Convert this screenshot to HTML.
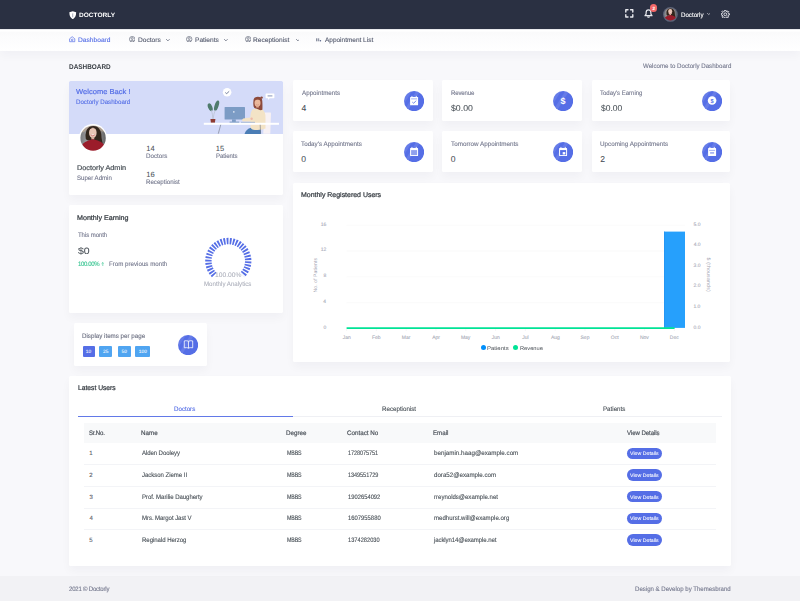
<!DOCTYPE html>
<html><head><meta charset="utf-8"><title>Doctorly Dashboard</title>
<style>
html,body{margin:0;padding:0;width:800px;height:601px;overflow:hidden;background:#f8f8fb}
body{position:relative;font-family:"Liberation Sans",sans-serif}
.t{position:absolute;white-space:nowrap;font-family:"Liberation Sans",sans-serif;text-rendering:geometricPrecision}
.r{position:absolute;display:block}
</style></head><body>
<div class="r" style="left:0.00px;top:0.00px;width:800.00px;height:601.00px;background:#f8f8fb;"></div>
<div class="r" style="left:0.00px;top:0.00px;width:800.00px;height:29.17px;background:#2a3042;"></div>
<div class="r" style="left:0.00px;top:29.17px;width:800.00px;height:21.83px;background:linear-gradient(#dcdde3 0px,#ffffff 1.4px,#ffffff 2.0px,#fafafb 3.4px,#fcfcfd 10px,#ffffff 100%);box-shadow:0 5px 10px rgba(18,38,63,0.03);"></div>
<div class="r" style="left:0.00px;top:575.60px;width:800.00px;height:25.40px;background:#f2f2f5;"></div>
<svg class="r" style="left:69.3px;top:10.5px" width="7.5" height="8.4" viewBox="0 0 15 17"><path d="M7.5 0.3 L14.3 2.6 C14.5 9 12.4 13.6 7.5 16.7 C2.6 13.6 0.5 9 0.7 2.6 Z" fill="#fff"/><path d="M6.6 5.2 L8.4 4.4 L8.4 12.6 L6.6 12.6 Z" fill="#9aa0b0"/></svg>
<span class="t" style="left:79.31px;top:13.00px;font-size:6.30px;line-height:6.30px;color:#ffffff;font-weight:bold;letter-spacing:0.000px;transform:scaleX(1.0401);transform-origin:0 0;">DOCTORLY</span>
<svg class="r" style="left:625.3px;top:9.4px" width="8.6" height="8.8" viewBox="0 0 86 88" fill="none" stroke="#e8e9ee" stroke-width="14" stroke-linecap="round" stroke-linejoin="round"><path d="M8 30 V8 H30 M56 8 H78 V30 M78 58 V80 H56 M30 80 H8 V58"/></svg>
<svg class="r" style="left:644.2px;top:9.0px" width="9" height="9.2" viewBox="0 0 90 92" fill="none" stroke="#e8e9ee" stroke-width="12" stroke-linejoin="round" stroke-linecap="round"><path d="M45 9 C29 9 21 21 21 37 V52 L10 67 H80 L69 52 V37 C69 21 61 9 45 9 Z"/><path d="M37 79 Q45 86 53 79"/></svg>
<div class="r" style="left:650.0px;top:4.4px;width:7.2px;height:7.2px;border-radius:50%;background:#f46a6a"></div>
<span class="t" style="left:652.43px;top:7.00px;font-size:4.60px;line-height:4.60px;color:#ffffff;font-weight:bold;letter-spacing:0.000px;-webkit-text-stroke:0.05px #fff;">2</span>
<svg class="r" style="left:663.4px;top:7.1px" width="14.8" height="14.8" viewBox="0 0 100 100"><defs><clipPath id="av1"><circle cx="50" cy="50" r="42"/></clipPath><filter id="av1f" x="-10%" y="-10%" width="120%" height="120%"><feGaussianBlur stdDeviation="1.3"/></filter><linearGradient id="av1g" x1="0" y1="0" x2="1" y2="0"><stop offset="0" stop-color="#6f7175"/><stop offset="0.35" stop-color="#9d9d9f"/><stop offset="0.7" stop-color="#8c8a88"/><stop offset="1" stop-color="#4e5055"/></linearGradient></defs><circle cx="50" cy="50" r="50" fill="#5d6479"/><g clip-path="url(#av1)"><g filter="url(#av1f)"><rect x="-5" y="-5" width="110" height="110" fill="url(#av1g)"/><path d="M0 0 H100 V26 Q84 30 74 22 Q60 14 46 18 Q30 14 18 28 Q8 30 0 28Z" fill="#cdb49a" opacity="0.55"/><path d="M24 52 Q20 22 36 11 Q50 4 64 10 Q80 20 80 48 Q82 62 84 68 Q74 70 66 62 L36 58 Q28 60 24 52Z" fill="#33261f"/><ellipse cx="49" cy="31" rx="13.5" ry="18.5" fill="#e8c5b5"/><path d="M36 20 Q44 10 60 16 Q54 12 46 12 Q38 14 36 20Z" fill="#33261f"/><path d="M42 37 Q49 45 56 37 Z" fill="#fff"/><path d="M42 38.5 Q49 46 56 38.5" stroke="#c84a52" stroke-width="2.2" fill="none"/><rect x="44" y="47" width="10" height="8" fill="#d9ad9b"/><path d="M4 100 Q6 72 22 64 Q36 56 49 54 Q64 56 78 64 Q94 72 96 100Z" fill="#9b1b2b"/></g></g></svg>
<span class="t" style="left:680.99px;top:13.00px;font-size:6.50px;line-height:6.50px;color:#ffffff;font-weight:normal;letter-spacing:0.000px;-webkit-text-stroke:0.12px #ffffff;transform:scaleX(0.9448);transform-origin:0 0;">Doctorly</span>
<svg class="r" style="left:706.6px;top:13.4px" width="3.4" height="2.2" viewBox="0 0 34 22" fill="none" stroke="#d5d7de" stroke-width="7" stroke-linecap="round"><path d="M4 4 L17 16 L30 4"/></svg>
<svg class="r" style="left:721.2px;top:9.5px" width="8.6" height="8.6" viewBox="0 0 8.6 8.6" fill="none" stroke="#e8e9ee" stroke-width="0.95" stroke-linejoin="round"><path d="M7.44 3.66 L8.57 3.79 L8.57 4.81 L7.44 4.94 L6.97 6.07 L7.68 6.95 L6.95 7.68 L6.07 6.97 L4.94 7.44 L4.81 8.57 L3.79 8.57 L3.66 7.44 L2.53 6.97 L1.65 7.68 L0.92 6.95 L1.63 6.07 L1.16 4.94 L0.03 4.81 L0.03 3.79 L1.16 3.66 L1.63 2.53 L0.92 1.65 L1.65 0.92 L2.53 1.63 L3.66 1.16 L3.79 0.03 L4.81 0.03 L4.94 1.16 L6.07 1.63 L6.95 0.92 L7.68 1.65 L6.97 2.53 Z"/><circle cx="4.3" cy="4.3" r="1.4"/></svg>
<svg class="r" style="left:69.3px;top:36.3px" width="6.4" height="6.4" viewBox="69.3 36.3 6.4 6.4" fill="none" stroke="#556ee6" stroke-width="0.7" stroke-linejoin="round"><path d="M72.5 37.0 L75.1 39.1 V42.0 H69.9 V39.1 Z"/><circle cx="72.5" cy="40.2" r="0.85"/></svg>
<span class="t" style="left:78.45px;top:38.00px;font-size:6.50px;line-height:6.50px;color:#556ee6;font-weight:normal;letter-spacing:0.000px;-webkit-text-stroke:0.12px #556ee6;transform:scaleX(1.0213);transform-origin:0 0;">Dashboard</span>
<svg class="r" style="left:128.80px;top:36.1px" width="6.4" height="6.4" viewBox="-3.2 -3.2 6.4 6.4" fill="none" stroke="#5d6375" stroke-width="0.65"><circle r="2.75"/><circle cx="0" cy="-0.7" r="0.95"/><path d="M-1.8 1.9 Q0 0.4 1.8 1.9"/></svg>
<span class="t" style="left:137.65px;top:38.00px;font-size:6.50px;line-height:6.50px;color:#545a6d;font-weight:normal;letter-spacing:0.000px;-webkit-text-stroke:0.12px #545a6d;transform:scaleX(1.0172);transform-origin:0 0;">Doctors</span>
<svg class="r" style="left:166.1px;top:39.2px" width="3.8" height="2.4" viewBox="0 0 38 24" fill="none" stroke="#6a7082" stroke-width="8" stroke-linecap="round"><path d="M4 4 L19 19 L34 4"/></svg>
<svg class="r" style="left:186.30px;top:36.1px" width="6.4" height="6.4" viewBox="-3.2 -3.2 6.4 6.4" fill="none" stroke="#5d6375" stroke-width="0.65"><circle r="2.75"/><circle cx="0" cy="-0.7" r="0.95"/><path d="M-1.8 1.9 Q0 0.4 1.8 1.9"/></svg>
<span class="t" style="left:195.16px;top:38.00px;font-size:6.50px;line-height:6.50px;color:#545a6d;font-weight:normal;letter-spacing:-0.000px;-webkit-text-stroke:0.12px #545a6d;transform:scaleX(1.0124);transform-origin:0 0;">Patients</span>
<svg class="r" style="left:224.4px;top:39.2px" width="3.8" height="2.4" viewBox="0 0 38 24" fill="none" stroke="#6a7082" stroke-width="8" stroke-linecap="round"><path d="M4 4 L19 19 L34 4"/></svg>
<svg class="r" style="left:244.70px;top:36.1px" width="6.4" height="6.4" viewBox="-3.2 -3.2 6.4 6.4" fill="none" stroke="#5d6375" stroke-width="0.65"><circle r="2.75"/><circle cx="0" cy="-0.7" r="0.95"/><path d="M-1.8 1.9 Q0 0.4 1.8 1.9"/></svg>
<span class="t" style="left:253.46px;top:38.00px;font-size:6.50px;line-height:6.50px;color:#545a6d;font-weight:normal;letter-spacing:0.000px;-webkit-text-stroke:0.12px #545a6d;transform:scaleX(1.0147);transform-origin:0 0;">Receptionist</span>
<svg class="r" style="left:295.5px;top:39.2px" width="3.8" height="2.4" viewBox="0 0 38 24" fill="none" stroke="#6a7082" stroke-width="8" stroke-linecap="round"><path d="M4 4 L19 19 L34 4"/></svg>
<svg class="r" style="left:315px;top:36.5px" width="7" height="5.5" viewBox="315 36.5 7 5.5"><rect x="316.1" y="37.8" width="1.0" height="3.0" fill="#7d8394"/><rect x="317.6" y="37.8" width="1.6" height="3.0" fill="#9499a8"/><circle cx="320.4" cy="40.3" r="0.8" fill="#56648a"/></svg>
<span class="t" style="left:325.38px;top:38.00px;font-size:6.50px;line-height:6.50px;color:#545a6d;font-weight:normal;letter-spacing:0.000px;-webkit-text-stroke:0.12px #545a6d;transform:scaleX(0.9950);transform-origin:0 0;">Appointment List</span>
<span class="t" style="left:69.07px;top:65.00px;font-size:6.90px;line-height:6.90px;color:#3b4046;font-weight:bold;letter-spacing:-0.001px;transform:scaleX(0.9300);transform-origin:0 0;">DASHBOARD</span>
<span class="t" style="left:642.67px;top:64.00px;font-size:6.50px;line-height:6.50px;color:#74788d;font-weight:normal;letter-spacing:0.000px;-webkit-text-stroke:0.12px #74788d;transform:scaleX(0.9452);transform-origin:0 0;">Welcome to Doctorly Dashboard</span>
<div class="r" style="left:69.00px;top:80.60px;width:214.00px;height:114.00px;background:#fff;border-radius:1.6px;box-shadow:0 5px 10px rgba(18,38,63,0.035);"></div>
<div class="r" style="left:69.00px;top:80.60px;width:214.00px;height:53.10px;background:#d4dbf9;border-radius:1.6px 1.6px 0 0;"></div>
<span class="t" style="left:76.06px;top:88.00px;font-size:7.20px;line-height:7.20px;color:#556ee6;font-weight:normal;letter-spacing:0.000px;-webkit-text-stroke:0.2px #556ee6;transform:scaleX(1.0529);transform-origin:0 0;">Welcome Back !</span>
<span class="t" style="left:75.59px;top:100.00px;font-size:6.50px;line-height:6.50px;color:#556ee6;font-weight:normal;letter-spacing:0.000px;-webkit-text-stroke:0.12px #556ee6;transform:scaleX(0.9451);transform-origin:0 0;">Doctorly Dashboard</span>
<svg class="r" style="left:200px;top:84px" width="82" height="49.7" viewBox="200 84 82 49.7">
<circle cx="227.1" cy="92.3" r="4.3" fill="#fff"/><path d="M225.3 92.6 L226.7 93.6 L229.2 91.3" stroke="#46557a" stroke-width="0.75" fill="none"/>
<path d="M266.2 93.4 H273.8 Q274.4 93.4 274.4 94 V97.6 Q274.4 98.3 273.8 98.3 H269.6 L268.3 100 L268 98.3 H266.2 Q265.6 98.3 265.6 97.6 V94 Q265.6 93.4 266.2 93.4 Z" fill="#fff"/><rect x="267.6" y="95.3" width="4.8" height="1.2" fill="#9aa6c4"/>
<ellipse cx="210.2" cy="107.2" rx="2.1" ry="4.1" transform="rotate(-22 210.2 107.2)" fill="#4f7b6c"/>
<ellipse cx="216.6" cy="105.6" rx="2.0" ry="5.4" transform="rotate(18 216.6 105.6)" fill="#4f7b6c"/>
<path d="M211.4 110 Q212.6 114 212.9 119 M215.3 110 Q213.6 114 213.1 119" stroke="#b8c0cf" stroke-width="0.7" fill="none"/>
<path d="M210.4 119 H215.4 L214.9 122.8 H210.9 Z" fill="#8e3b32"/>
<rect x="224.6" y="106.9" width="20.4" height="12.5" rx="0.5" fill="#7c9cc5"/>
<rect x="233.1" y="111.2" width="1.4" height="1.4" fill="#e9eef7"/>
<rect x="232" y="119.3" width="3.8" height="2.6" fill="#7c9cc5"/><rect x="229.6" y="121.6" width="9.6" height="1.2" fill="#7c9cc5"/>
<path d="M264.6 112.5 H270.4 Q271.1 112.5 271 113.4 L270.3 133.7 H263.2 Z" fill="#f7f1f4"/>
<path d="M244.5 134 Q246 129 251 127.8 H258.5 Q261.5 128.4 260.8 134 Z" fill="#4a7db5"/>
<path d="M252.4 109.4 Q257.5 107.8 262.3 109.6 Q265.6 111.5 265.5 118 V128.6 Q262 130.4 255 130 Q251 129.8 250.5 127 L250.6 121.5 Q246 121.8 242.3 121.2 Q241.8 119.4 243.2 118.6 L250.2 117.6 Q250.5 112 252.4 109.4 Z" fill="#f3e3c6"/>
<circle cx="251.6" cy="118.8" r="1.2" fill="#efb8a8"/>
<rect x="241" y="121.9" width="14" height="0.8" fill="#8aa3c8"/>
<path d="M253.4 101.5 Q253.4 96.8 257.8 96.8 Q262 96.8 262.3 101 Q262.6 105.5 262.4 109.8 Q260.5 110.6 258.6 109.6 L256 108.6 Q254 108.4 253.6 106.5 Q253.1 104 253.4 101.5 Z" fill="#8d4a3b"/>
<circle cx="261.6" cy="97.6" r="1.2" fill="#8d4a3b"/>
<ellipse cx="257.5" cy="102.9" rx="3.0" ry="3.6" fill="#eab89b"/><path d="M255.9 104.6 Q257.4 105.6 258.9 104.6" stroke="#b86a5a" stroke-width="0.35" fill="none"/>
<path d="M254.4 101.0 Q256.8 98.6 260.9 100.2 Q260.6 98.0 257.6 97.9 Q254.8 98.2 254.4 101.0 Z" fill="#8d4a3b"/>
<rect x="256.2" y="106.1" width="2.6" height="1.4" fill="#e6ae93"/>
<rect x="203.8" y="122.8" width="75.2" height="2.0" fill="#fff"/>
<path d="M220.7 124.8 L218.3 133.7" stroke="#6f7483" stroke-width="0.6"/><path d="M260.2 124.8 L260.6 133.7" stroke="#6f7483" stroke-width="0.6"/>
</svg>
<svg class="r" style="left:78.6px;top:123.7px" width="28.2" height="28.2" viewBox="0 0 100 100"><defs><clipPath id="av2"><circle cx="50" cy="50" r="45"/></clipPath><filter id="av2f" x="-10%" y="-10%" width="120%" height="120%"><feGaussianBlur stdDeviation="1.3"/></filter><linearGradient id="av2g" x1="0" y1="0" x2="1" y2="0"><stop offset="0" stop-color="#6f7175"/><stop offset="0.35" stop-color="#9d9d9f"/><stop offset="0.7" stop-color="#8c8a88"/><stop offset="1" stop-color="#4e5055"/></linearGradient></defs><circle cx="50" cy="50" r="50" fill="#ffffff"/><g clip-path="url(#av2)"><g filter="url(#av2f)"><rect x="-5" y="-5" width="110" height="110" fill="url(#av2g)"/><path d="M0 0 H100 V26 Q84 30 74 22 Q60 14 46 18 Q30 14 18 28 Q8 30 0 28Z" fill="#cdb49a" opacity="0.55"/><path d="M24 52 Q20 22 36 11 Q50 4 64 10 Q80 20 80 48 Q82 62 84 68 Q74 70 66 62 L36 58 Q28 60 24 52Z" fill="#33261f"/><ellipse cx="49" cy="31" rx="13.5" ry="18.5" fill="#e8c5b5"/><path d="M36 20 Q44 10 60 16 Q54 12 46 12 Q38 14 36 20Z" fill="#33261f"/><path d="M42 37 Q49 45 56 37 Z" fill="#fff"/><path d="M42 38.5 Q49 46 56 38.5" stroke="#c84a52" stroke-width="2.2" fill="none"/><rect x="44" y="47" width="10" height="8" fill="#d9ad9b"/><path d="M4 100 Q6 72 22 64 Q36 56 49 54 Q64 56 78 64 Q94 72 96 100Z" fill="#9b1b2b"/></g></g></svg>
<span class="t" style="left:77.10px;top:166.00px;font-size:6.90px;line-height:6.90px;color:#495057;font-weight:normal;letter-spacing:0.000px;-webkit-text-stroke:0.2px #495057;transform:scaleX(1.0598);transform-origin:0 0;">Doctorly Admin</span>
<span class="t" style="left:77.43px;top:176.00px;font-size:6.50px;line-height:6.50px;color:#74788d;font-weight:normal;letter-spacing:0.000px;-webkit-text-stroke:0.12px #74788d;transform:scaleX(0.9366);transform-origin:0 0;">Super Admin</span>
<span class="t" style="left:146.24px;top:145.00px;font-size:7.50px;line-height:7.50px;color:#495057;font-weight:normal;letter-spacing:0.150px;-webkit-text-stroke:0.06px #495057;">14</span>
<span class="t" style="left:146.09px;top:154.00px;font-size:6.50px;line-height:6.50px;color:#74788d;font-weight:normal;letter-spacing:0.000px;-webkit-text-stroke:0.12px #74788d;transform:scaleX(0.9571);transform-origin:0 0;">Doctors</span>
<span class="t" style="left:215.64px;top:145.00px;font-size:7.50px;line-height:7.50px;color:#495057;font-weight:normal;letter-spacing:0.150px;-webkit-text-stroke:0.06px #495057;">15</span>
<span class="t" style="left:215.50px;top:154.00px;font-size:6.50px;line-height:6.50px;color:#74788d;font-weight:normal;letter-spacing:-0.066px;-webkit-text-stroke:0.12px #74788d;transform:scaleX(0.9300);transform-origin:0 0;">Patients</span>
<span class="t" style="left:146.24px;top:171.00px;font-size:7.50px;line-height:7.50px;color:#495057;font-weight:normal;letter-spacing:0.150px;-webkit-text-stroke:0.06px #495057;">16</span>
<span class="t" style="left:146.09px;top:180.00px;font-size:6.50px;line-height:6.50px;color:#74788d;font-weight:normal;letter-spacing:0.000px;-webkit-text-stroke:0.12px #74788d;transform:scaleX(0.9437);transform-origin:0 0;">Receptionist</span>
<div class="r" style="left:293.00px;top:80.40px;width:139.60px;height:40.60px;background:#fff;border-radius:1.6px;box-shadow:0 5px 10px rgba(18,38,63,0.035);"></div>
<span class="t" style="left:301.58px;top:91.00px;font-size:6.50px;line-height:6.50px;color:#74788d;font-weight:normal;letter-spacing:0.000px;-webkit-text-stroke:0.12px #74788d;transform:scaleX(0.9594);transform-origin:0 0;">Appointments</span>
<span class="t" style="left:301.41px;top:104.00px;font-size:8.60px;line-height:8.60px;color:#495057;font-weight:normal;letter-spacing:0.000px;-webkit-text-stroke:0.06px #495057;">4</span>
<svg class="r" style="left:404.10px;top:90.50px" width="20.2" height="20.2" viewBox="-10.1 -10.1 20.2 20.2"><defs><clipPath id="ccal-check414100"><circle r="10.1"/></clipPath></defs><circle r="10.1" fill="#556ee6"/><g clip-path="url(#ccal-check414100)"><rect x="-1.5" y="-14" width="3.3" height="28" fill="rgba(255,255,255,0.1)" transform="rotate(32) translate(-2 0)"/><rect x="-8" y="-14" width="5" height="28" fill="rgba(255,255,255,0.1)" transform="rotate(32) translate(-4 0)"/></g><g transform="translate(0 -0.6)"><rect x="-4" y="-3.6" width="8" height="8.4" rx="0.6" fill="#fff"/><rect x="-3" y="-2" width="6" height="0.8" fill="#8fa0ee"/><rect x="-2.6" y="-4.6" width="0.9" height="1.6" fill="#fff"/><rect x="1.7" y="-4.6" width="0.9" height="1.6" fill="#fff"/><path d="M-1.8 1.6 L-0.4 2.8 L2 0.2" stroke="#556ee6" stroke-width="0.8" fill="none"/></g></svg>
<div class="r" style="left:442.40px;top:80.40px;width:139.20px;height:40.60px;background:#fff;border-radius:1.6px;box-shadow:0 5px 10px rgba(18,38,63,0.035);"></div>
<span class="t" style="left:450.50px;top:91.00px;font-size:6.50px;line-height:6.50px;color:#74788d;font-weight:normal;letter-spacing:-0.168px;-webkit-text-stroke:0.12px #74788d;transform:scaleX(0.9300);transform-origin:0 0;">Revenue</span>
<span class="t" style="left:450.91px;top:104.00px;font-size:8.60px;line-height:8.60px;color:#495057;font-weight:normal;letter-spacing:0.000px;-webkit-text-stroke:0.06px #495057;transform:scaleX(1.0183);transform-origin:0 0;">$0.00</span>
<svg class="r" style="left:553.10px;top:90.50px" width="20.2" height="20.2" viewBox="-10.1 -10.1 20.2 20.2"><defs><clipPath id="cdollar563100"><circle r="10.1"/></clipPath></defs><circle r="10.1" fill="#556ee6"/><g clip-path="url(#cdollar563100)"><rect x="-1.5" y="-14" width="3.3" height="28" fill="rgba(255,255,255,0.1)" transform="rotate(32) translate(-2 0)"/><rect x="-8" y="-14" width="5" height="28" fill="rgba(255,255,255,0.1)" transform="rotate(32) translate(-4 0)"/></g><g transform="translate(0 -0.6)"><text x="0" y="3.2" text-anchor="middle" font-family="Liberation Sans" font-weight="bold" font-size="9" fill="#fff">$</text></g></svg>
<div class="r" style="left:592.00px;top:80.40px;width:138.40px;height:40.60px;background:#fff;border-radius:1.6px;box-shadow:0 5px 10px rgba(18,38,63,0.035);"></div>
<span class="t" style="left:600.46px;top:91.00px;font-size:6.50px;line-height:6.50px;color:#74788d;font-weight:normal;letter-spacing:-0.031px;-webkit-text-stroke:0.12px #74788d;transform:scaleX(0.9300);transform-origin:0 0;">Today's Earning</span>
<span class="t" style="left:600.51px;top:104.00px;font-size:8.60px;line-height:8.60px;color:#495057;font-weight:normal;letter-spacing:0.000px;-webkit-text-stroke:0.06px #495057;transform:scaleX(0.9899);transform-origin:0 0;">$0.00</span>
<svg class="r" style="left:701.90px;top:90.50px" width="20.2" height="20.2" viewBox="-10.1 -10.1 20.2 20.2"><defs><clipPath id="cdollar-circle712100"><circle r="10.1"/></clipPath></defs><circle r="10.1" fill="#556ee6"/><g clip-path="url(#cdollar-circle712100)"><rect x="-1.5" y="-14" width="3.3" height="28" fill="rgba(255,255,255,0.1)" transform="rotate(32) translate(-2 0)"/><rect x="-8" y="-14" width="5" height="28" fill="rgba(255,255,255,0.1)" transform="rotate(32) translate(-4 0)"/></g><g transform="translate(0 -0.6)"><circle cx="0" cy="0" r="4.3" fill="#fff"/><text x="0" y="2.1" text-anchor="middle" font-family="Liberation Sans" font-weight="bold" font-size="5.6" fill="#556ee6">$</text></g></svg>
<div class="r" style="left:293.00px;top:131.40px;width:139.60px;height:40.60px;background:#fff;border-radius:1.6px;box-shadow:0 5px 10px rgba(18,38,63,0.035);"></div>
<span class="t" style="left:301.46px;top:142.00px;font-size:6.50px;line-height:6.50px;color:#74788d;font-weight:normal;letter-spacing:0.000px;-webkit-text-stroke:0.12px #74788d;transform:scaleX(0.9655);transform-origin:0 0;">Today's Appointments</span>
<span class="t" style="left:301.26px;top:155.00px;font-size:8.60px;line-height:8.60px;color:#495057;font-weight:normal;letter-spacing:0.000px;-webkit-text-stroke:0.06px #495057;">0</span>
<svg class="r" style="left:404.10px;top:141.50px" width="20.2" height="20.2" viewBox="-10.1 -10.1 20.2 20.2"><defs><clipPath id="ccalendar414151"><circle r="10.1"/></clipPath></defs><circle r="10.1" fill="#556ee6"/><g clip-path="url(#ccalendar414151)"><rect x="-1.5" y="-14" width="3.3" height="28" fill="rgba(255,255,255,0.1)" transform="rotate(32) translate(-2 0)"/><rect x="-8" y="-14" width="5" height="28" fill="rgba(255,255,255,0.1)" transform="rotate(32) translate(-4 0)"/></g><g transform="translate(0 -0.6)"><rect x="-4" y="-3.4" width="8" height="8" rx="0.6" fill="#fff"/><rect x="-3" y="-1.4" width="6" height="5" fill="#8fa0ee"/><rect x="-2.6" y="-4.6" width="0.9" height="1.6" fill="#fff"/><rect x="1.7" y="-4.6" width="0.9" height="1.6" fill="#fff"/></g></svg>
<div class="r" style="left:442.40px;top:131.40px;width:139.20px;height:40.60px;background:#fff;border-radius:1.6px;box-shadow:0 5px 10px rgba(18,38,63,0.035);"></div>
<span class="t" style="left:450.86px;top:142.00px;font-size:6.50px;line-height:6.50px;color:#74788d;font-weight:normal;letter-spacing:0.000px;-webkit-text-stroke:0.12px #74788d;transform:scaleX(0.9675);transform-origin:0 0;">Tomorrow Appointments</span>
<span class="t" style="left:450.66px;top:155.00px;font-size:8.60px;line-height:8.60px;color:#495057;font-weight:normal;letter-spacing:0.000px;-webkit-text-stroke:0.06px #495057;">0</span>
<svg class="r" style="left:553.10px;top:141.50px" width="20.2" height="20.2" viewBox="-10.1 -10.1 20.2 20.2"><defs><clipPath id="ccal-event563151"><circle r="10.1"/></clipPath></defs><circle r="10.1" fill="#556ee6"/><g clip-path="url(#ccal-event563151)"><rect x="-1.5" y="-14" width="3.3" height="28" fill="rgba(255,255,255,0.1)" transform="rotate(32) translate(-2 0)"/><rect x="-8" y="-14" width="5" height="28" fill="rgba(255,255,255,0.1)" transform="rotate(32) translate(-4 0)"/></g><g transform="translate(0 -0.6)"><rect x="-4" y="-3.4" width="8" height="8" rx="0.6" fill="#fff"/><rect x="-3" y="-1.4" width="6" height="5" fill="#556ee6"/><rect x="-0.4" y="0.6" width="2.6" height="2.4" fill="#fff"/><rect x="-2.6" y="-4.6" width="0.9" height="1.6" fill="#fff"/><rect x="1.7" y="-4.6" width="0.9" height="1.6" fill="#fff"/></g></svg>
<div class="r" style="left:592.00px;top:131.40px;width:138.40px;height:40.60px;background:#fff;border-radius:1.6px;box-shadow:0 5px 10px rgba(18,38,63,0.035);"></div>
<span class="t" style="left:600.11px;top:142.00px;font-size:6.50px;line-height:6.50px;color:#74788d;font-weight:normal;letter-spacing:0.000px;-webkit-text-stroke:0.12px #74788d;transform:scaleX(0.9680);transform-origin:0 0;">Upcoming Appointments</span>
<span class="t" style="left:600.17px;top:155.00px;font-size:8.60px;line-height:8.60px;color:#495057;font-weight:normal;letter-spacing:0.000px;-webkit-text-stroke:0.06px #495057;">2</span>
<svg class="r" style="left:701.90px;top:141.50px" width="20.2" height="20.2" viewBox="-10.1 -10.1 20.2 20.2"><defs><clipPath id="ccal-minus712151"><circle r="10.1"/></clipPath></defs><circle r="10.1" fill="#556ee6"/><g clip-path="url(#ccal-minus712151)"><rect x="-1.5" y="-14" width="3.3" height="28" fill="rgba(255,255,255,0.1)" transform="rotate(32) translate(-2 0)"/><rect x="-8" y="-14" width="5" height="28" fill="rgba(255,255,255,0.1)" transform="rotate(32) translate(-4 0)"/></g><g transform="translate(0 -0.6)"><rect x="-4" y="-3.4" width="8" height="8" rx="0.6" fill="#fff"/><rect x="-3" y="-1.6" width="6" height="0.8" fill="#8fa0ee"/><rect x="-2" y="1" width="4" height="0.9" fill="#556ee6"/><rect x="-2.6" y="-4.6" width="0.9" height="1.6" fill="#fff"/><rect x="1.7" y="-4.6" width="0.9" height="1.6" fill="#fff"/></g></svg>
<div class="r" style="left:69.00px;top:205.20px;width:214.00px;height:108.30px;background:#fff;border-radius:1.6px;box-shadow:0 5px 10px rgba(18,38,63,0.035);"></div>
<span class="t" style="left:77.41px;top:216.00px;font-size:6.90px;line-height:6.90px;color:#343a40;font-weight:normal;letter-spacing:0.000px;-webkit-text-stroke:0.24px #343a40;transform:scaleX(1.0337);transform-origin:0 0;">Monthly Earning</span>
<span class="t" style="left:77.86px;top:233.00px;font-size:6.50px;line-height:6.50px;color:#74788d;font-weight:normal;letter-spacing:-0.081px;-webkit-text-stroke:0.12px #74788d;transform:scaleX(0.9300);transform-origin:0 0;">This month</span>
<span class="t" style="left:77.89px;top:246.00px;font-size:9.40px;line-height:9.40px;color:#495057;font-weight:normal;letter-spacing:0.000px;-webkit-text-stroke:0.06px #495057;transform:scaleX(1.1214);transform-origin:0 0;">$0</span>
<span class="t" style="left:77.55px;top:262.00px;font-size:6.50px;line-height:6.50px;color:#34c38f;font-weight:normal;letter-spacing:-0.394px;-webkit-text-stroke:0.12px #34c38f;transform:scaleX(0.9300);transform-origin:0 0;">100.00%</span>
<svg class="r" style="left:100.6px;top:261.6px" width="3.6" height="4.4" viewBox="0 0 36 44" fill="none" stroke="#34c38f" stroke-width="6"><path d="M18 42 V6 M5 18 L18 5 L31 18"/></svg>
<span class="t" style="left:109.29px;top:262.00px;font-size:6.50px;line-height:6.50px;color:#74788d;font-weight:normal;letter-spacing:0.000px;-webkit-text-stroke:0.12px #74788d;transform:scaleX(0.9493);transform-origin:0 0;">From previous month</span>
<svg class="r" style="left:0;top:0" width="800" height="601"><path d="M214.23 275.03 A19.9 19.9 0 1 1 242.37 275.03" fill="none" stroke="#556ee6" stroke-width="6.4" stroke-dasharray="1.75 1.25"/></svg>
<span class="t" style="left:214.50px;top:273.00px;font-size:6.60px;line-height:6.60px;color:#a9acb8;font-weight:normal;letter-spacing:0.000px;-webkit-text-stroke:0.12px #a9acb8;transform:scaleX(1.0147);transform-origin:0 0;-webkit-text-stroke:0.05px #a9acb8;">100.00%</span>
<span class="t" style="left:204.09px;top:282.00px;font-size:6.50px;line-height:6.50px;color:#a9acb8;font-weight:normal;letter-spacing:0.000px;-webkit-text-stroke:0.12px #a9acb8;transform:scaleX(0.9424);transform-origin:0 0;-webkit-text-stroke:0.06px #a9acb8;">Monthly Analytics</span>
<div class="r" style="left:74.40px;top:323.40px;width:132.30px;height:42.30px;background:#fff;border-radius:1.6px;box-shadow:0 5px 10px rgba(18,38,63,0.035);"></div>
<span class="t" style="left:82.39px;top:334.00px;font-size:6.50px;line-height:6.50px;color:#6b6f80;font-weight:normal;letter-spacing:0.000px;-webkit-text-stroke:0.12px #6b6f80;transform:scaleX(0.9542);transform-origin:0 0;">Display items per page</span>
<div class="r" style="left:82.50px;top:346.00px;width:12.00px;height:11.20px;background:#556ee6;border-radius:1px;"></div>
<span class="t" style="left:85.75px;top:351.00px;font-size:4.80px;line-height:4.80px;color:#ffffff;font-weight:normal;letter-spacing:0.000px;-webkit-text-stroke:0.12px #ffffff;-webkit-text-stroke:0.04px #fff;">10</span>
<div class="r" style="left:99.20px;top:346.00px;width:13.10px;height:11.20px;background:#50a5f1;border-radius:1px;"></div>
<span class="t" style="left:103.06px;top:351.00px;font-size:4.80px;line-height:4.80px;color:#ffffff;font-weight:normal;letter-spacing:0.000px;-webkit-text-stroke:0.12px #ffffff;-webkit-text-stroke:0.04px #fff;">25</span>
<div class="r" style="left:117.60px;top:346.00px;width:13.10px;height:11.20px;background:#50a5f1;border-radius:1px;"></div>
<span class="t" style="left:121.48px;top:351.00px;font-size:4.80px;line-height:4.80px;color:#ffffff;font-weight:normal;letter-spacing:0.000px;-webkit-text-stroke:0.12px #ffffff;-webkit-text-stroke:0.04px #fff;">50</span>
<div class="r" style="left:135.40px;top:346.00px;width:15.00px;height:11.20px;background:#50a5f1;border-radius:1px;"></div>
<span class="t" style="left:138.81px;top:351.00px;font-size:4.80px;line-height:4.80px;color:#ffffff;font-weight:normal;letter-spacing:0.000px;-webkit-text-stroke:0.12px #ffffff;-webkit-text-stroke:0.04px #fff;">100</span>
<svg class="r" style="left:178.20px;top:334.70px" width="20.2" height="20.2" viewBox="-10.1 -10.1 20.2 20.2"><defs><clipPath id="cbook188344"><circle r="10.1"/></clipPath></defs><circle r="10.1" fill="#556ee6"/><g clip-path="url(#cbook188344)"><rect x="-1.5" y="-14" width="3.3" height="28" fill="rgba(255,255,255,0.1)" transform="rotate(32) translate(-2 0)"/><rect x="-8" y="-14" width="5" height="28" fill="rgba(255,255,255,0.1)" transform="rotate(32) translate(-4 0)"/></g><g transform="translate(0 -0.6)"><path d="M-3.8 -3.6 Q-1.6 -4.1 0.4 -3.3 Q2.4 -4.1 4.6 -3.6 V3.3 Q2.4 2.9 0.4 3.5 Q-1.6 2.9 -3.8 3.3 Z M0.4 -3.3 V3.9" fill="none" stroke="#fff" stroke-width="0.8" stroke-linejoin="round"/></g></svg>
<div class="r" style="left:292.80px;top:182.60px;width:437.60px;height:179.90px;background:#fff;border-radius:1.6px;box-shadow:0 5px 10px rgba(18,38,63,0.035);"></div>
<span class="t" style="left:301.22px;top:193.00px;font-size:6.90px;line-height:6.90px;color:#343a40;font-weight:normal;letter-spacing:0.000px;-webkit-text-stroke:0.24px #343a40;transform:scaleX(1.0105);transform-origin:0 0;">Monthly Registered Users</span>
<svg class="r" style="left:0;top:0" width="800" height="601"><line x1="346.5" y1="225.2" x2="685" y2="225.2" stroke="#f3f3f3" stroke-width="0.45"/><line x1="346.5" y1="251.0" x2="685" y2="251.0" stroke="#f3f3f3" stroke-width="0.45"/><line x1="346.5" y1="276.9" x2="685" y2="276.9" stroke="#f3f3f3" stroke-width="0.45"/><line x1="346.5" y1="302.7" x2="685" y2="302.7" stroke="#f3f3f3" stroke-width="0.45"/><rect x="664.2" y="231.6" width="20.8" height="96.3" fill="#26a0fc"/><rect x="664.2" y="231.6" width="0.8" height="96.3" fill="#1b8ff0"/><line x1="346.6" y1="328.1" x2="674.6" y2="328.1" stroke="#00e396" stroke-width="1.9"/><line x1="346.60" y1="329.2" x2="346.60" y2="331" stroke="#e6e6e6" stroke-width="0.4"/><line x1="376.40" y1="329.2" x2="376.40" y2="331" stroke="#e6e6e6" stroke-width="0.4"/><line x1="406.20" y1="329.2" x2="406.20" y2="331" stroke="#e6e6e6" stroke-width="0.4"/><line x1="436.00" y1="329.2" x2="436.00" y2="331" stroke="#e6e6e6" stroke-width="0.4"/><line x1="465.80" y1="329.2" x2="465.80" y2="331" stroke="#e6e6e6" stroke-width="0.4"/><line x1="495.60" y1="329.2" x2="495.60" y2="331" stroke="#e6e6e6" stroke-width="0.4"/><line x1="525.40" y1="329.2" x2="525.40" y2="331" stroke="#e6e6e6" stroke-width="0.4"/><line x1="555.20" y1="329.2" x2="555.20" y2="331" stroke="#e6e6e6" stroke-width="0.4"/><line x1="585.00" y1="329.2" x2="585.00" y2="331" stroke="#e6e6e6" stroke-width="0.4"/><line x1="614.80" y1="329.2" x2="614.80" y2="331" stroke="#e6e6e6" stroke-width="0.4"/><line x1="644.60" y1="329.2" x2="644.60" y2="331" stroke="#e6e6e6" stroke-width="0.4"/><line x1="674.40" y1="329.2" x2="674.40" y2="331" stroke="#e6e6e6" stroke-width="0.4"/></svg>
<span class="t" style="left:320.66px;top:223.00px;font-size:5.00px;line-height:5.00px;color:#a2a6b3;font-weight:normal;letter-spacing:0.000px;-webkit-text-stroke:0.12px #a2a6b3;-webkit-text-stroke:0.07px #a2a6b3;">16</span>
<span class="t" style="left:320.70px;top:248.00px;font-size:5.00px;line-height:5.00px;color:#a2a6b3;font-weight:normal;letter-spacing:0.000px;-webkit-text-stroke:0.12px #a2a6b3;-webkit-text-stroke:0.07px #a2a6b3;">12</span>
<span class="t" style="left:323.44px;top:274.00px;font-size:5.00px;line-height:5.00px;color:#a2a6b3;font-weight:normal;letter-spacing:0.000px;-webkit-text-stroke:0.12px #a2a6b3;-webkit-text-stroke:0.07px #a2a6b3;">8</span>
<span class="t" style="left:323.36px;top:300.00px;font-size:5.00px;line-height:5.00px;color:#a2a6b3;font-weight:normal;letter-spacing:0.000px;-webkit-text-stroke:0.12px #a2a6b3;-webkit-text-stroke:0.07px #a2a6b3;">4</span>
<span class="t" style="left:323.41px;top:326.00px;font-size:5.00px;line-height:5.00px;color:#a2a6b3;font-weight:normal;letter-spacing:0.000px;-webkit-text-stroke:0.12px #a2a6b3;-webkit-text-stroke:0.07px #a2a6b3;">0</span>
<span class="t" style="left:693.60px;top:223.00px;font-size:5.00px;line-height:5.00px;color:#a2a6b3;font-weight:normal;letter-spacing:0.000px;-webkit-text-stroke:0.12px #a2a6b3;-webkit-text-stroke:0.07px #a2a6b3;">5.0</span>
<span class="t" style="left:693.69px;top:243.00px;font-size:5.00px;line-height:5.00px;color:#a2a6b3;font-weight:normal;letter-spacing:0.000px;-webkit-text-stroke:0.12px #a2a6b3;-webkit-text-stroke:0.07px #a2a6b3;">4.0</span>
<span class="t" style="left:693.61px;top:264.00px;font-size:5.00px;line-height:5.00px;color:#a2a6b3;font-weight:normal;letter-spacing:0.000px;-webkit-text-stroke:0.12px #a2a6b3;-webkit-text-stroke:0.07px #a2a6b3;">3.0</span>
<span class="t" style="left:693.55px;top:284.00px;font-size:5.00px;line-height:5.00px;color:#a2a6b3;font-weight:normal;letter-spacing:0.000px;-webkit-text-stroke:0.12px #a2a6b3;-webkit-text-stroke:0.07px #a2a6b3;">2.0</span>
<span class="t" style="left:693.42px;top:305.00px;font-size:5.00px;line-height:5.00px;color:#a2a6b3;font-weight:normal;letter-spacing:0.000px;-webkit-text-stroke:0.12px #a2a6b3;-webkit-text-stroke:0.07px #a2a6b3;">1.0</span>
<span class="t" style="left:693.60px;top:326.00px;font-size:5.00px;line-height:5.00px;color:#a2a6b3;font-weight:normal;letter-spacing:0.000px;-webkit-text-stroke:0.12px #a2a6b3;-webkit-text-stroke:0.07px #a2a6b3;">0.0</span>
<span class="t" style="left:342.69px;top:336.00px;font-size:5.00px;line-height:5.00px;color:#a2a6b3;font-weight:normal;letter-spacing:0.000px;-webkit-text-stroke:0.12px #a2a6b3;-webkit-text-stroke:0.07px #a2a6b3;">Jan</span>
<span class="t" style="left:371.99px;top:336.00px;font-size:5.00px;line-height:5.00px;color:#a2a6b3;font-weight:normal;letter-spacing:0.000px;-webkit-text-stroke:0.12px #a2a6b3;-webkit-text-stroke:0.07px #a2a6b3;">Feb</span>
<span class="t" style="left:401.73px;top:336.00px;font-size:5.00px;line-height:5.00px;color:#a2a6b3;font-weight:normal;letter-spacing:0.000px;-webkit-text-stroke:0.12px #a2a6b3;-webkit-text-stroke:0.07px #a2a6b3;">Mar</span>
<span class="t" style="left:432.14px;top:336.00px;font-size:5.00px;line-height:5.00px;color:#a2a6b3;font-weight:normal;letter-spacing:0.000px;-webkit-text-stroke:0.12px #a2a6b3;-webkit-text-stroke:0.07px #a2a6b3;">Apr</span>
<span class="t" style="left:460.88px;top:336.00px;font-size:5.00px;line-height:5.00px;color:#a2a6b3;font-weight:normal;letter-spacing:0.000px;-webkit-text-stroke:0.12px #a2a6b3;-webkit-text-stroke:0.07px #a2a6b3;">May</span>
<span class="t" style="left:491.69px;top:336.00px;font-size:5.00px;line-height:5.00px;color:#a2a6b3;font-weight:normal;letter-spacing:0.000px;-webkit-text-stroke:0.12px #a2a6b3;-webkit-text-stroke:0.07px #a2a6b3;">Jun</span>
<span class="t" style="left:522.34px;top:336.00px;font-size:5.00px;line-height:5.00px;color:#a2a6b3;font-weight:normal;letter-spacing:0.000px;-webkit-text-stroke:0.12px #a2a6b3;-webkit-text-stroke:0.07px #a2a6b3;">Jul</span>
<span class="t" style="left:550.91px;top:336.00px;font-size:5.00px;line-height:5.00px;color:#a2a6b3;font-weight:normal;letter-spacing:0.000px;-webkit-text-stroke:0.12px #a2a6b3;-webkit-text-stroke:0.07px #a2a6b3;">Aug</span>
<span class="t" style="left:580.54px;top:336.00px;font-size:5.00px;line-height:5.00px;color:#a2a6b3;font-weight:normal;letter-spacing:0.000px;-webkit-text-stroke:0.12px #a2a6b3;-webkit-text-stroke:0.07px #a2a6b3;">Sep</span>
<span class="t" style="left:610.81px;top:336.00px;font-size:5.00px;line-height:5.00px;color:#a2a6b3;font-weight:normal;letter-spacing:0.000px;-webkit-text-stroke:0.12px #a2a6b3;-webkit-text-stroke:0.07px #a2a6b3;">Oct</span>
<span class="t" style="left:639.96px;top:336.00px;font-size:5.00px;line-height:5.00px;color:#a2a6b3;font-weight:normal;letter-spacing:0.000px;-webkit-text-stroke:0.12px #a2a6b3;-webkit-text-stroke:0.07px #a2a6b3;">Nov</span>
<span class="t" style="left:669.82px;top:336.00px;font-size:5.00px;line-height:5.00px;color:#a2a6b3;font-weight:normal;letter-spacing:0.000px;-webkit-text-stroke:0.12px #a2a6b3;-webkit-text-stroke:0.07px #a2a6b3;">Dec</span>
<span class="t" style="left:0;top:0;font-size:5.0px;line-height:5.0px;color:#9fa4b2;transform:translate(316.3px,275.2px) rotate(-90deg) translate(-50%,-50%);transform-origin:0 0;letter-spacing:0.12px">No. of Patients</span>
<span class="t" style="left:0;top:0;font-size:5.0px;line-height:5.0px;color:#9fa4b2;transform:translate(707.1px,274.7px) rotate(90deg) translate(-50%,-50%);transform-origin:0 0;letter-spacing:0.3px">$ (thousands)</span>
<div class="r" style="left:480.5px;top:345.15px;width:5.2px;height:5.2px;border-radius:50%;background:#008ffb"></div>
<span class="t" style="left:486.81px;top:347.00px;font-size:5.40px;line-height:5.40px;color:#565c62;font-weight:normal;letter-spacing:0.000px;-webkit-text-stroke:0.12px #565c62;transform:scaleX(1.1101);transform-origin:0 0;-webkit-text-stroke:0.04px #565c62;">Patients</span>
<div class="r" style="left:513.0px;top:345.15px;width:5.2px;height:5.2px;border-radius:50%;background:#00e396"></div>
<span class="t" style="left:519.63px;top:347.00px;font-size:5.40px;line-height:5.40px;color:#565c62;font-weight:normal;letter-spacing:0.000px;-webkit-text-stroke:0.12px #565c62;transform:scaleX(1.0579);transform-origin:0 0;-webkit-text-stroke:0.04px #565c62;">Revenue</span>
<div class="r" style="left:69.00px;top:375.60px;width:662.00px;height:190.40px;background:#fff;border-radius:1.6px;box-shadow:0 5px 10px rgba(18,38,63,0.035);"></div>
<span class="t" style="left:77.65px;top:386.00px;font-size:6.90px;line-height:6.90px;color:#343a40;font-weight:normal;letter-spacing:0.000px;-webkit-text-stroke:0.24px #343a40;transform:scaleX(0.9732);transform-origin:0 0;">Latest Users</span>
<div class="r" style="left:77.60px;top:416.00px;width:644.90px;height:0.45px;background:#eff0f4;"></div>
<div class="r" style="left:77.60px;top:415.60px;width:215.00px;height:0.85px;background:#6279e8;"></div>
<span class="t" style="left:174.09px;top:407.00px;font-size:6.50px;line-height:6.50px;color:#556ee6;font-weight:normal;letter-spacing:0.000px;-webkit-text-stroke:0.12px #556ee6;transform:scaleX(0.9478);transform-origin:0 0;">Doctors</span>
<span class="t" style="left:382.49px;top:407.00px;font-size:6.50px;line-height:6.50px;color:#495057;font-weight:normal;letter-spacing:0.000px;-webkit-text-stroke:0.12px #495057;transform:scaleX(0.9522);transform-origin:0 0;">Receptionist</span>
<span class="t" style="left:603.39px;top:407.00px;font-size:6.50px;line-height:6.50px;color:#495057;font-weight:normal;letter-spacing:0.000px;-webkit-text-stroke:0.12px #495057;transform:scaleX(0.9508);transform-origin:0 0;">Patients</span>
<div class="r" style="left:84.00px;top:423.10px;width:631.80px;height:19.50px;background:#f8f9fa;"></div>
<span class="t" style="left:89.13px;top:431.00px;font-size:6.50px;line-height:6.50px;color:#4d535b;font-weight:normal;letter-spacing:-0.188px;-webkit-text-stroke:0.2px #4d535b;transform:scaleX(0.9300);transform-origin:0 0;">Sr.No.</span>
<span class="t" style="left:141.48px;top:431.00px;font-size:6.50px;line-height:6.50px;color:#4d535b;font-weight:normal;letter-spacing:0.000px;-webkit-text-stroke:0.2px #4d535b;transform:scaleX(0.9621);transform-origin:0 0;">Name</span>
<span class="t" style="left:286.39px;top:431.00px;font-size:6.50px;line-height:6.50px;color:#4d535b;font-weight:normal;letter-spacing:0.000px;-webkit-text-stroke:0.2px #4d535b;transform:scaleX(0.9565);transform-origin:0 0;">Degree</span>
<span class="t" style="left:347.49px;top:431.00px;font-size:6.50px;line-height:6.50px;color:#4d535b;font-weight:normal;letter-spacing:0.000px;-webkit-text-stroke:0.2px #4d535b;transform:scaleX(0.9614);transform-origin:0 0;">Contact No</span>
<span class="t" style="left:433.09px;top:431.00px;font-size:6.50px;line-height:6.50px;color:#4d535b;font-weight:normal;letter-spacing:0.000px;-webkit-text-stroke:0.2px #4d535b;transform:scaleX(0.9493);transform-origin:0 0;">Email</span>
<span class="t" style="left:626.87px;top:431.00px;font-size:6.50px;line-height:6.50px;color:#4d535b;font-weight:normal;letter-spacing:-0.060px;-webkit-text-stroke:0.2px #4d535b;transform:scaleX(0.9300);transform-origin:0 0;">View Details</span>
<div class="r" style="left:84.00px;top:464.40px;width:631.80px;height:0.45px;background:#f3f4f7;"></div>
<span class="t" style="left:89.15px;top:451.00px;font-size:6.00px;line-height:6.00px;color:#5b6168;font-weight:normal;letter-spacing:0.000px;-webkit-text-stroke:0.12px #5b6168;">1</span>
<span class="t" style="left:141.98px;top:451.00px;font-size:6.50px;line-height:6.50px;color:#495057;font-weight:normal;letter-spacing:-0.094px;-webkit-text-stroke:0.12px #495057;transform:scaleX(0.9300);transform-origin:0 0;">Alden Dooleyy</span>
<span class="t" style="left:286.56px;top:451.00px;font-size:6.50px;line-height:6.50px;color:#495057;font-weight:normal;letter-spacing:-0.175px;-webkit-text-stroke:0.12px #495057;transform:scaleX(0.8200);transform-origin:0 0;">MBBS</span>
<span class="t" style="left:347.59px;top:451.00px;font-size:6.50px;line-height:6.50px;color:#495057;font-weight:normal;letter-spacing:-0.084px;-webkit-text-stroke:0.12px #495057;transform:scaleX(0.8500);transform-origin:0 0;">1728075751</span>
<span class="t" style="left:433.59px;top:451.00px;font-size:6.50px;line-height:6.50px;color:#495057;font-weight:normal;letter-spacing:0.000px;-webkit-text-stroke:0.12px #495057;transform:scaleX(0.9592);transform-origin:0 0;">benjamin.haag@example.com</span>
<div class="r" style="left:626.60px;top:447.60px;width:35.90px;height:11.60px;background:#556ee6;border-radius:6px;"></div>
<span class="t" style="left:629.97px;top:452.00px;font-size:5.00px;line-height:5.00px;color:#ffffff;font-weight:normal;letter-spacing:0.000px;-webkit-text-stroke:0.12px #ffffff;transform:scaleX(1.0468);transform-origin:0 0;-webkit-text-stroke:0.06px #fff;">View Details</span>
<div class="r" style="left:84.00px;top:486.05px;width:631.80px;height:0.45px;background:#f3f4f7;"></div>
<span class="t" style="left:89.30px;top:473.00px;font-size:6.00px;line-height:6.00px;color:#5b6168;font-weight:normal;letter-spacing:0.000px;-webkit-text-stroke:0.12px #5b6168;">2</span>
<span class="t" style="left:141.91px;top:473.00px;font-size:6.50px;line-height:6.50px;color:#495057;font-weight:normal;letter-spacing:-0.038px;-webkit-text-stroke:0.12px #495057;transform:scaleX(0.9300);transform-origin:0 0;">Jackson Zieme II</span>
<span class="t" style="left:286.56px;top:473.00px;font-size:6.50px;line-height:6.50px;color:#495057;font-weight:normal;letter-spacing:-0.175px;-webkit-text-stroke:0.12px #495057;transform:scaleX(0.8200);transform-origin:0 0;">MBBS</span>
<span class="t" style="left:347.59px;top:473.00px;font-size:6.50px;line-height:6.50px;color:#495057;font-weight:normal;letter-spacing:-0.060px;-webkit-text-stroke:0.12px #495057;transform:scaleX(0.8500);transform-origin:0 0;">1349551729</span>
<span class="t" style="left:433.74px;top:473.00px;font-size:6.50px;line-height:6.50px;color:#495057;font-weight:normal;letter-spacing:0.000px;-webkit-text-stroke:0.12px #495057;transform:scaleX(0.9492);transform-origin:0 0;">dora52@example.com</span>
<div class="r" style="left:626.60px;top:469.25px;width:35.90px;height:11.60px;background:#556ee6;border-radius:6px;"></div>
<span class="t" style="left:629.97px;top:474.00px;font-size:5.00px;line-height:5.00px;color:#ffffff;font-weight:normal;letter-spacing:0.000px;-webkit-text-stroke:0.12px #ffffff;transform:scaleX(1.0468);transform-origin:0 0;-webkit-text-stroke:0.06px #fff;">View Details</span>
<div class="r" style="left:84.00px;top:507.70px;width:631.80px;height:0.45px;background:#f3f4f7;"></div>
<span class="t" style="left:89.38px;top:495.00px;font-size:6.00px;line-height:6.00px;color:#5b6168;font-weight:normal;letter-spacing:0.000px;-webkit-text-stroke:0.12px #5b6168;">3</span>
<span class="t" style="left:141.50px;top:495.00px;font-size:6.50px;line-height:6.50px;color:#495057;font-weight:normal;letter-spacing:-0.059px;-webkit-text-stroke:0.12px #495057;transform:scaleX(0.9300);transform-origin:0 0;">Prof. Marilie Daugherty</span>
<span class="t" style="left:286.56px;top:495.00px;font-size:6.50px;line-height:6.50px;color:#495057;font-weight:normal;letter-spacing:-0.175px;-webkit-text-stroke:0.12px #495057;transform:scaleX(0.8200);transform-origin:0 0;">MBBS</span>
<span class="t" style="left:347.56px;top:495.00px;font-size:6.50px;line-height:6.50px;color:#495057;font-weight:normal;letter-spacing:0.000px;-webkit-text-stroke:0.12px #495057;transform:scaleX(0.8945);transform-origin:0 0;">1902654092</span>
<span class="t" style="left:433.61px;top:495.00px;font-size:6.50px;line-height:6.50px;color:#495057;font-weight:normal;letter-spacing:0.000px;-webkit-text-stroke:0.12px #495057;transform:scaleX(0.9302);transform-origin:0 0;">rreynolds@example.net</span>
<div class="r" style="left:626.60px;top:490.90px;width:35.90px;height:11.60px;background:#556ee6;border-radius:6px;"></div>
<span class="t" style="left:629.97px;top:496.00px;font-size:5.00px;line-height:5.00px;color:#ffffff;font-weight:normal;letter-spacing:0.000px;-webkit-text-stroke:0.12px #ffffff;transform:scaleX(1.0468);transform-origin:0 0;-webkit-text-stroke:0.06px #fff;">View Details</span>
<div class="r" style="left:84.00px;top:529.35px;width:631.80px;height:0.45px;background:#f3f4f7;"></div>
<span class="t" style="left:89.46px;top:516.00px;font-size:6.00px;line-height:6.00px;color:#5b6168;font-weight:normal;letter-spacing:0.000px;-webkit-text-stroke:0.12px #5b6168;">4</span>
<span class="t" style="left:141.50px;top:516.00px;font-size:6.50px;line-height:6.50px;color:#495057;font-weight:normal;letter-spacing:-0.070px;-webkit-text-stroke:0.12px #495057;transform:scaleX(0.9300);transform-origin:0 0;">Mrs. Margot Jast V</span>
<span class="t" style="left:286.56px;top:516.00px;font-size:6.50px;line-height:6.50px;color:#495057;font-weight:normal;letter-spacing:-0.175px;-webkit-text-stroke:0.12px #495057;transform:scaleX(0.8200);transform-origin:0 0;">MBBS</span>
<span class="t" style="left:347.56px;top:516.00px;font-size:6.50px;line-height:6.50px;color:#495057;font-weight:normal;letter-spacing:0.000px;-webkit-text-stroke:0.12px #495057;transform:scaleX(0.9037);transform-origin:0 0;">1607955880</span>
<span class="t" style="left:433.59px;top:516.00px;font-size:6.50px;line-height:6.50px;color:#495057;font-weight:normal;letter-spacing:0.000px;-webkit-text-stroke:0.12px #495057;transform:scaleX(0.9377);transform-origin:0 0;">medhurst.will@example.org</span>
<div class="r" style="left:626.60px;top:512.55px;width:35.90px;height:11.60px;background:#556ee6;border-radius:6px;"></div>
<span class="t" style="left:629.97px;top:517.00px;font-size:5.00px;line-height:5.00px;color:#ffffff;font-weight:normal;letter-spacing:0.000px;-webkit-text-stroke:0.12px #ffffff;transform:scaleX(1.0468);transform-origin:0 0;-webkit-text-stroke:0.06px #fff;">View Details</span>
<span class="t" style="left:89.36px;top:538.00px;font-size:6.00px;line-height:6.00px;color:#5b6168;font-weight:normal;letter-spacing:0.000px;-webkit-text-stroke:0.12px #5b6168;">5</span>
<span class="t" style="left:141.50px;top:538.00px;font-size:6.50px;line-height:6.50px;color:#495057;font-weight:normal;letter-spacing:-0.049px;-webkit-text-stroke:0.12px #495057;transform:scaleX(0.9300);transform-origin:0 0;">Reginald Herzog</span>
<span class="t" style="left:286.56px;top:538.00px;font-size:6.50px;line-height:6.50px;color:#495057;font-weight:normal;letter-spacing:-0.175px;-webkit-text-stroke:0.12px #495057;transform:scaleX(0.8200);transform-origin:0 0;">MBBS</span>
<span class="t" style="left:347.57px;top:538.00px;font-size:6.50px;line-height:6.50px;color:#495057;font-weight:normal;letter-spacing:0.000px;-webkit-text-stroke:0.12px #495057;transform:scaleX(0.8755);transform-origin:0 0;">1374282030</span>
<span class="t" style="left:434.15px;top:538.00px;font-size:6.50px;line-height:6.50px;color:#495057;font-weight:normal;letter-spacing:-0.101px;-webkit-text-stroke:0.12px #495057;transform:scaleX(0.9300);transform-origin:0 0;">jacklyn14@example.net</span>
<div class="r" style="left:626.60px;top:534.20px;width:35.90px;height:11.60px;background:#556ee6;border-radius:6px;"></div>
<span class="t" style="left:629.97px;top:539.00px;font-size:5.00px;line-height:5.00px;color:#ffffff;font-weight:normal;letter-spacing:0.000px;-webkit-text-stroke:0.12px #ffffff;transform:scaleX(1.0468);transform-origin:0 0;-webkit-text-stroke:0.06px #fff;">View Details</span>
<span class="t" style="left:69.10px;top:587.00px;font-size:6.50px;line-height:6.50px;color:#74788d;font-weight:normal;letter-spacing:-0.232px;-webkit-text-stroke:0.12px #74788d;transform:scaleX(0.9300);transform-origin:0 0;">2021 © Doctorly</span>
<span class="t" style="left:635.20px;top:587.00px;font-size:6.50px;line-height:6.50px;color:#74788d;font-weight:normal;letter-spacing:0.000px;-webkit-text-stroke:0.12px #74788d;transform:scaleX(0.9336);transform-origin:0 0;">Design &amp; Develop by Themesbrand</span>
</body></html>
